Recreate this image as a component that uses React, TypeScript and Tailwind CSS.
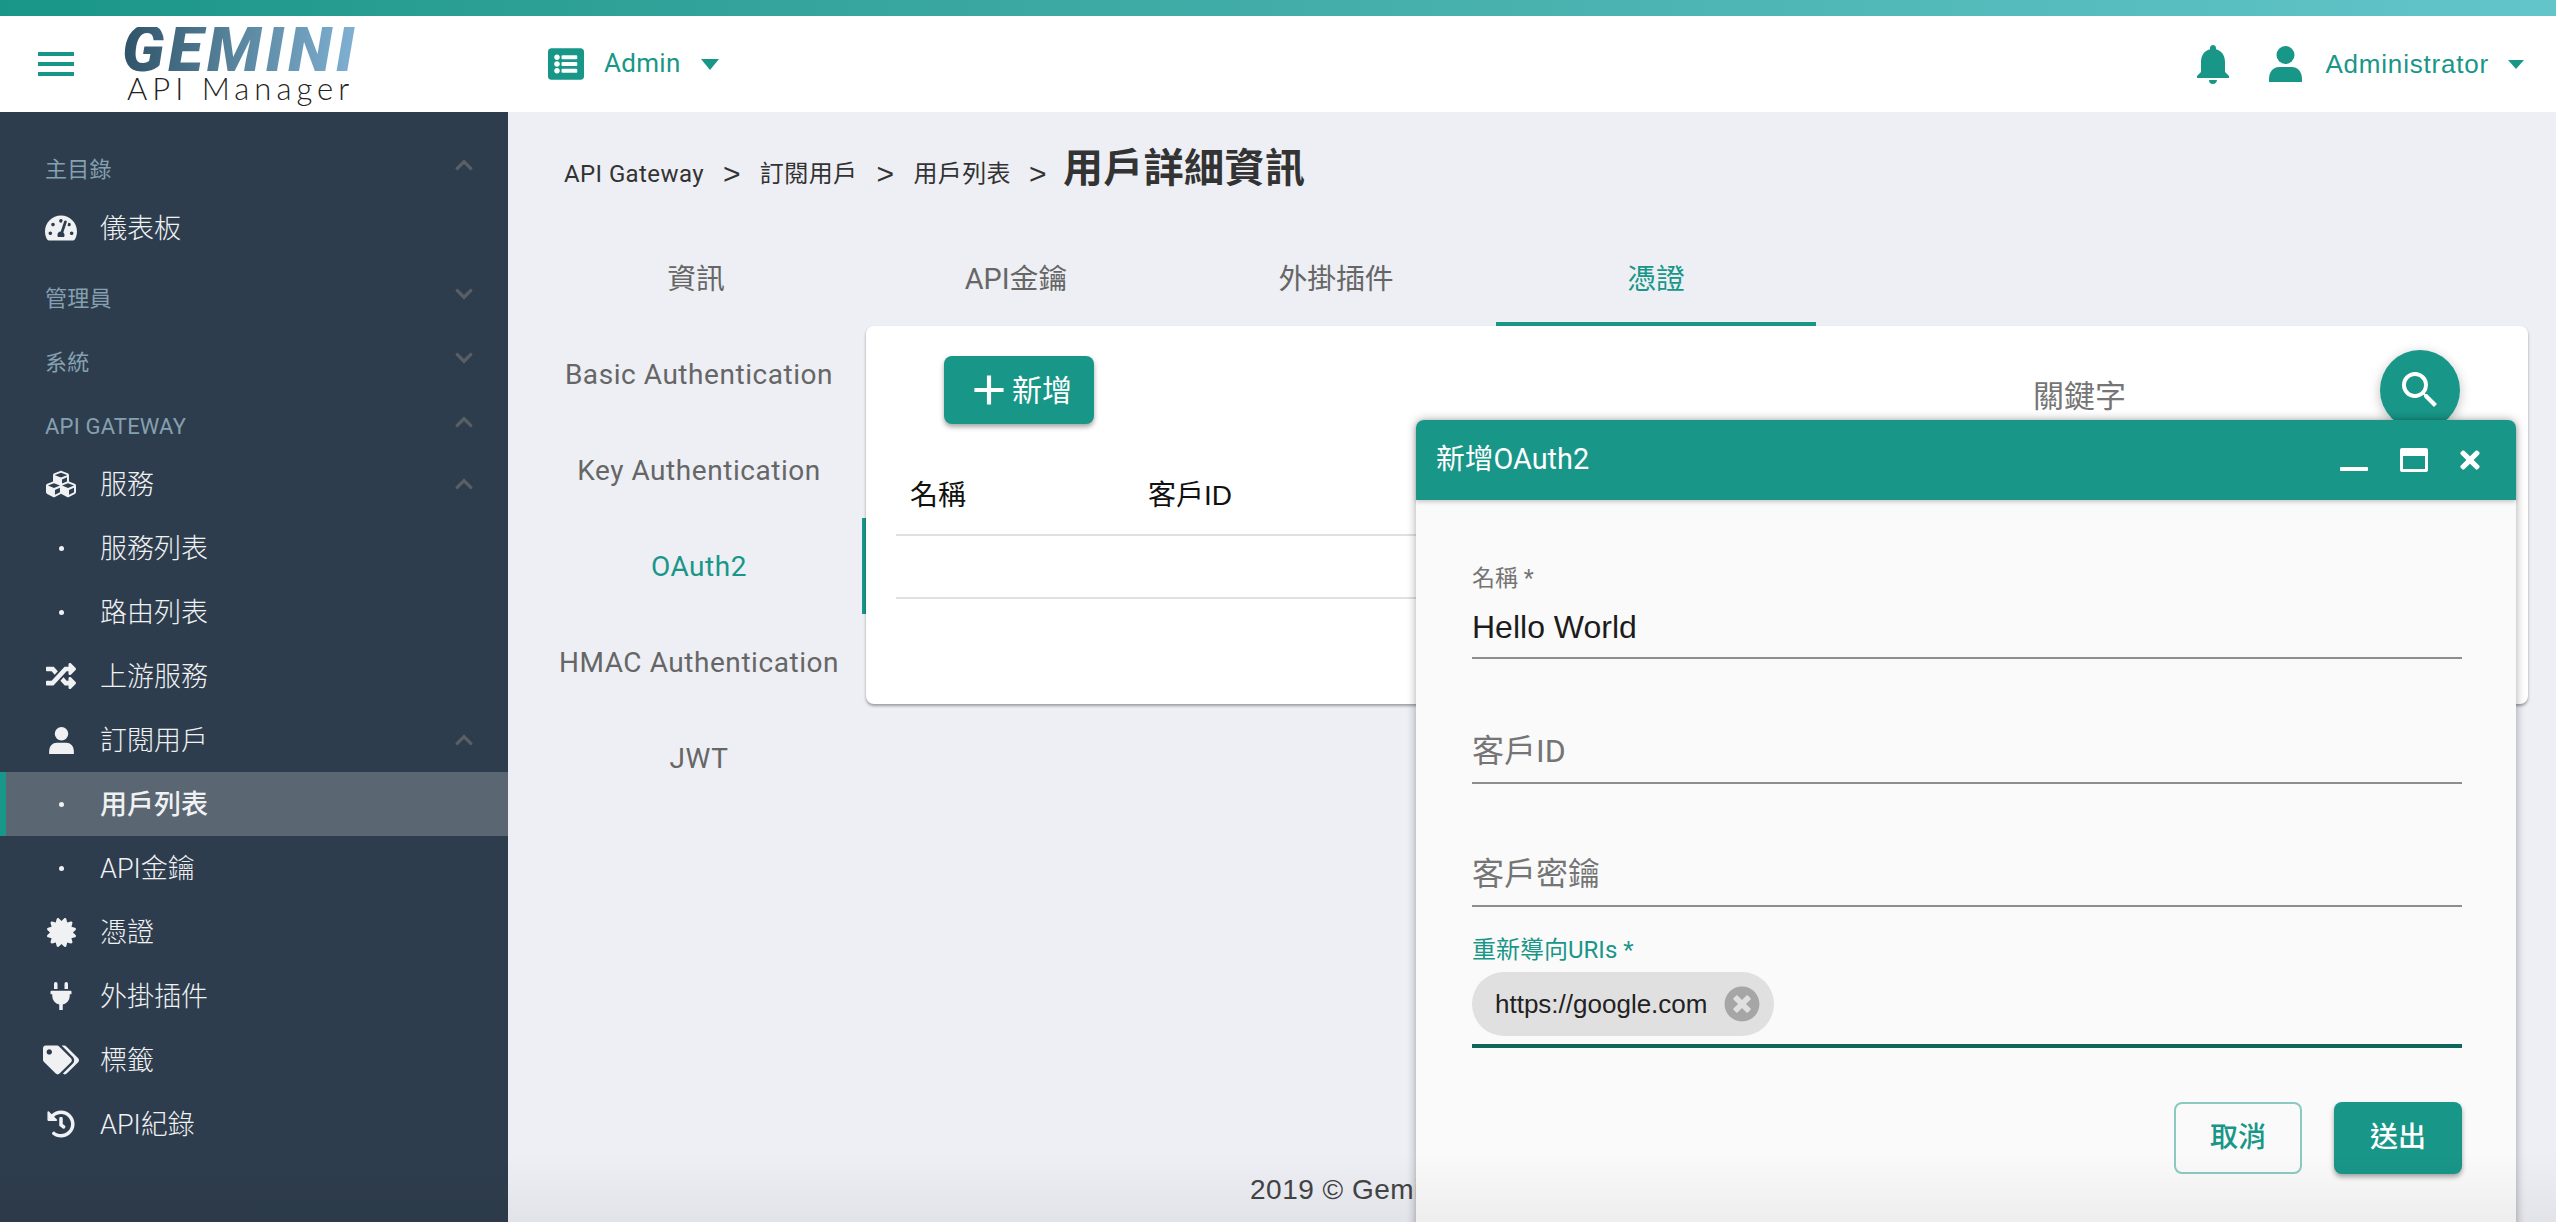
import {
  FaTachometerAlt,
  FaCubes,
  FaRandom,
  FaCertificate,
  FaPlug,
  FaTags,
  FaHistory,
  FaChevronUp,
  FaChevronDown,
  FaListAlt,
  FaTimes,
  FaTimesCircle,
} from "react-icons/fa";
import { MdSearch, MdAdd, MdMenu, MdNotifications } from "react-icons/md";

const TEAL = "text-[#189688]";
const CJK = "font-['Roboto','Noto_Sans_CJK_TC',sans-serif]";

const PersonIcon = ({ className }: { className: string }) => (
  <svg viewBox="0 0 33 36" fill="currentColor" className={className}>
    <circle cx="16.5" cy="9" r="9" />
    <path d="M0 33c0-8 5-12 10-12h13c5 0 10 4 10 12v3H0z" />
  </svg>
);

const SectionLabel = ({ label, up }: { label: string; up?: boolean }) => (
  <div className="h-[64px] flex items-center pl-[45px] pr-[34px] justify-between text-[22px] tracking-[0.2px] text-[#85a0b0]">
    <span>{label}</span>
    {up ? (
      <FaChevronUp className="w-[20px] h-[20px] text-[#5a5f65] -mt-[8px]" />
    ) : (
      <FaChevronDown className="w-[20px] h-[20px] text-[#5a5f65] -mt-[8px]" />
    )}
  </div>
);

const NavItem = ({
  icon,
  label,
  active,
  chevron,
}: {
  icon?: React.ReactNode;
  label: string;
  active?: boolean;
  chevron?: boolean;
}) => (
  <div
    className={`h-[64px] flex items-center text-[27px] text-[#f0f1f3] ${
      active ? "bg-[#5a6672] border-l-[6px] border-[#189688] font-medium" : "font-light"
    }`}
  >
    <div className={`flex justify-center ${active ? "w-[94px] pl-[16px]" : "w-[100px] pl-[22px]"}`}>
      {icon ?? <span className="w-[5px] h-[5px] rounded-full bg-[#f0f1f3]" />}
    </div>
    <span className="flex-1 mt-[2px]">{label}</span>
    {chevron && <FaChevronUp className="w-[20px] h-[20px] text-[#5a5f65] mr-[34px]" />}
  </div>
);

const Field = ({ label, value, className }: { label: string; value?: string; className: string }) => (
  <div className={`border-b-2 border-[#8d8d8d] ${className}`}>
    {value ? (
      <div>
        <div className="text-[23px] leading-[30px] text-[#757575]">{label}</div>
        <div className="text-[32px] leading-[44px] mt-[11px] pb-[8px] text-[#1c1c1c] font-['Liberation_Sans','Noto_Sans_CJK_TC',sans-serif]">
          {value}
        </div>
      </div>
    ) : (
      <div className="text-[32px] leading-[44px] pb-[9px] text-[#757575]">{label}</div>
    )}
  </div>
);

export default function App() {
  return (
    <div className={`relative w-[2556px] h-[1222px] overflow-hidden bg-[#edeff4] ${CJK}`}>
      <div className="h-[16px] bg-gradient-to-r from-[#189688] to-[#62c5ca]" />
      <header className="h-[96px] bg-white flex items-center">
        <MdMenu className="w-[48px] h-[48px] ml-[32px] text-[#189688]" />
        <div className="ml-[42px] w-[240px] h-[96px] flex flex-col">
          <span className="text-[64px] leading-[46px] mt-[11px] font-black italic tracking-[4px] font-['Roboto',sans-serif] bg-gradient-to-r from-[#2f5368] via-[#5a87a0] to-[#80b1d4] bg-clip-text text-transparent w-[236px]">
            GEMINI
          </span>
          <span className="text-[31px] leading-[28px] mt-[1px] pl-[5px] font-light tracking-[5px] text-[#222] font-['Lato',sans-serif]">
            API Manager
          </span>
        </div>
        <FaListAlt className="ml-[186px] w-[36px] h-[36px] text-[#189688]" />
        <span className={`ml-[20px] text-[26px] tracking-[0.3px] -mt-[2px] ${TEAL}`}>Admin</span>
        <span className="ml-[20px] border-x-[9px] border-x-transparent border-t-[11px] border-t-[#189688]" />
        <div className="ml-auto flex items-center pr-[32px]">
          <MdNotifications className="w-[48px] h-[48px] text-[#189688]" />
          <PersonIcon className="ml-[32px] w-[33px] h-[36px] text-[#189688]" />
          <span className={`ml-[23px] text-[26px] tracking-[0.8px] ${TEAL} font-['Liberation_Sans',sans-serif]`}>Administrator</span>
          <span className="ml-[19px] border-x-[8px] border-x-transparent border-t-[9px] border-t-[#189688]" />
        </div>
      </header>
      <div className="flex h-[1110px]">
        <aside className="w-[508px] shrink-0 bg-[#2e3d4d] pt-[25px]">
          <SectionLabel label="主目錄" up />
          <div className="-mt-[5px]">
            <NavItem label="儀表板" icon={<FaTachometerAlt className="w-[32px] h-[32px]" />} />
          </div>
          <div className="mt-[6px]">
            <SectionLabel label="管理員" />
            <SectionLabel label="系統" />
            <SectionLabel label="API GATEWAY" up />
          </div>
          <div className="-mt-[6px]">
            <NavItem label="服務" icon={<FaCubes className="w-[30px] h-[30px]" />} chevron />
            <NavItem label="服務列表" />
            <NavItem label="路由列表" />
            <NavItem label="上游服務" icon={<FaRandom className="w-[30px] h-[30px]" />} />
            <NavItem label="訂閱用戶" icon={<PersonIcon className="w-[25px] h-[27px]" />} chevron />
            <NavItem label="用戶列表" active />
            <NavItem label="API金鑰" />
            <NavItem label="憑證" icon={<FaCertificate className="w-[29px] h-[29px]" />} />
            <NavItem label="外掛插件" icon={<FaPlug className="w-[28px] h-[28px]" />} />
            <NavItem label="標籤" icon={<FaTags className="w-[36px] h-[36px]" />} />
            <NavItem label="API紀錄" icon={<FaHistory className="w-[28px] h-[28px]" />} />
          </div>
        </aside>
        <main className="flex-1 relative">
          <div className="flex items-center h-[104px] pl-[56px] pt-[20px] text-[24px] tracking-[0.4px] text-[#333]">
            <span>API Gateway</span>
            <span className="mx-[19px] text-[30px] leading-[30px] font-['Liberation_Sans',sans-serif]">&gt;</span>
            <span>訂閱用戶</span>
            <span className="mx-[19px] text-[30px] leading-[30px] font-['Liberation_Sans',sans-serif]">&gt;</span>
            <span>用戶列表</span>
            <span className="ml-[18px] mr-[16px] text-[30px] leading-[30px] font-['Liberation_Sans',sans-serif]">&gt;</span>
            <span className="text-[40px] leading-[40px] font-bold -mt-[10px]">用戶詳細資訊</span>
          </div>
          <div className="flex ml-[28px] h-[110px] text-[28.8px] text-[#666]">
            <div className="w-[320px] flex items-center justify-center pt-[22px] border-b-4 border-transparent">資訊</div>
            <div className="w-[320px] flex items-center justify-center pt-[22px] border-b-4 border-transparent">API金鑰</div>
            <div className="w-[320px] flex items-center justify-center pt-[22px] border-b-4 border-transparent">外掛插件</div>
            <div className={`w-[320px] flex items-center justify-center pt-[22px] border-b-4 border-[#189688] ${TEAL}`}>憑證</div>
          </div>
          <div className="flex ml-[28px] mr-[28px]">
            <div className="w-[330px] shrink-0 text-[28px] text-[#666] tracking-[0.55px]">
              <div className="h-[96px] flex items-center justify-center pr-[4px] pt-[2px]">Basic Authentication</div>
              <div className="h-[96px] flex items-center justify-center pr-[4px] pt-[2px]">Key Authentication</div>
              <div className={`h-[96px] flex items-center justify-center border-r-4 border-[#189688] pt-[2px] ${TEAL}`}>OAuth2</div>
              <div className="h-[96px] flex items-center justify-center pr-[4px] pt-[2px]">HMAC Authentication</div>
              <div className="h-[96px] flex items-center justify-center pr-[4px] pt-[2px]">JWT</div>
            </div>
            <section className="flex-1 h-[378px] bg-white rounded-[8px] shadow-[0_2px_3px_rgba(0,0,0,0.35)] pl-[30px] pr-[30px]">
              <div className="h-[134px] relative">
                <button className="absolute left-[48px] top-[30px] w-[150px] h-[68px] rounded-[8px] bg-[#189688] text-white text-[30px] flex items-center justify-center shadow-[0_3px_5px_rgba(0,0,0,0.35)]">
                  <MdAdd className="w-[50px] h-[50px] -mr-[2px]" />
                  <span className="pr-[2px]">新增</span>
                </button>
                <span className="absolute left-[1137px] top-[48px] text-[31px] text-[#757575]">關鍵字</span>
                <button className="absolute left-[1484px] top-[24px] w-[80px] h-[80px] rounded-full bg-[#189688] text-white flex items-center justify-center shadow-[0_3px_12px_rgba(0,0,0,0.25)]">
                  <MdSearch className="w-[48px] h-[48px]" />
                </button>
              </div>
              <div className="flex items-center h-[76px] border-b-2 border-[#e0e0e0] text-[28px] text-[#111] font-['Liberation_Sans','Noto_Sans_CJK_TC',sans-serif]">
                <span className="ml-[14px] w-[238px] -mt-[3px]">名稱</span>
                <span className="-mt-[3px]">客戶ID</span>
              </div>
              <div className="h-[63px] border-b-2 border-[#e0e0e0]" />
            </section>
          </div>
          <div className="absolute left-[742px] top-[1057px] text-[28px] tracking-[0.5px] text-[#444] whitespace-nowrap font-['Liberation_Sans',sans-serif]">
            2019 © Gemini Open Cloud
          </div>

          <div className="absolute left-[908px] top-[308px] w-[1100px] h-[900px] rounded-t-[8px] bg-[#fafafa] shadow-[0_0_10px_rgba(0,0,0,0.35)]">
            <div className="h-[80px] rounded-t-[8px] bg-[#189688] text-white flex items-center pl-[20px] pr-[32px] text-[28.8px] shadow-[0_2px_4px_rgba(0,0,0,0.2)]">
              <span>新增OAuth2</span>
              <span className="ml-auto mt-[17px] w-[28px] h-[4px] rounded-[1px] bg-white" />
              <span className="ml-[32px] w-[28px] h-[24px] rounded-[2px] border-[3px] border-t-[8px] border-white" />
              <FaTimes className="ml-[28px] w-[28px] h-[28px]" />
            </div>
            <div className="pl-[56px] pr-[54px]">
              <Field label="名稱 *" value="Hello World" className="mt-[64px]" />
              <Field label="客戶ID" className="mt-[70px]" />
              <Field label="客戶密鑰" className="mt-[68px]" />
              <div className="mt-[28px] text-[24px] leading-[30px] text-[#189688]">重新導向URIs *</div>
              <div className="border-b-4 border-[#10665c] mt-[7px] pb-[8px]">
                <div className="w-[302px] h-[64px] rounded-full bg-[#e0e0e0] flex items-center pl-[23px] text-[26px] text-[#222] font-['Liberation_Sans',sans-serif]">
                  <span>https://google.com</span>
                  <FaTimesCircle className="ml-[17px] w-[36px] h-[36px] text-[#a6a6a6]" />
                </div>
              </div>
              <div className="flex justify-end mt-[54px] gap-[32px] text-[28px]">
                <button className={`w-[128px] h-[72px] rounded-[8px] border-2 border-[#8cc9c2] font-medium ${TEAL}`}>取消</button>
                <button className="w-[128px] h-[72px] rounded-[8px] bg-[#189688] text-white font-medium shadow-[0_3px_5px_rgba(0,0,0,0.35)]">送出</button>
              </div>
            </div>
          </div>
        </main>
      </div>
      <div className="absolute left-0 right-0 bottom-0 h-[70px] bg-gradient-to-t from-black/5 to-transparent pointer-events-none" />
    </div>
  );
}
